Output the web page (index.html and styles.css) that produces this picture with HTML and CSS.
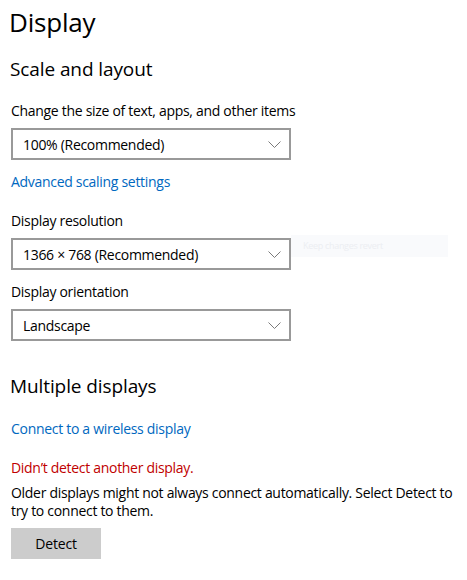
FILE: index.html
```html
<!DOCTYPE html>
<html>
<head>
<meta charset="utf-8">
<link rel="stylesheet" href="styles.css">
</head>
<body>
<main class="page">
  <h1 class="title">Display</h1>
  <h2 class="section">Scale and layout</h2>
  <div class="label label-first">Change the size of text, apps, and other items</div>
  <div class="select"><span>100% (Recommended)</span><svg class="chev" width="13" height="7" viewBox="0 0 13 7"><path d="M0.5 0.5 L6.5 6.5 L12.5 0.5" fill="none" stroke="#7a7a7a" stroke-width="1"/></svg></div>
  <a class="link link-scaling">Advanced scaling settings</a>
  <div class="label label-res">Display resolution</div>
  <div class="row">
    <div class="select"><span>1366 × 768 (Recommended)</span><svg class="chev" width="13" height="7" viewBox="0 0 13 7"><path d="M0.5 0.5 L6.5 6.5 L12.5 0.5" fill="none" stroke="#7a7a7a" stroke-width="1"/></svg></div>
    <div class="ghost"><span>Keep changes revert</span></div>
  </div>
  <div class="label label-orient">Display orientation</div>
  <div class="select"><span>Landscape</span><svg class="chev" width="13" height="7" viewBox="0 0 13 7"><path d="M0.5 0.5 L6.5 6.5 L12.5 0.5" fill="none" stroke="#7a7a7a" stroke-width="1"/></svg></div>
  <h2 class="section second">Multiple displays</h2>
  <a class="link link-wireless">Connect to a wireless display</a>
  <div class="error">Didn’t detect another display.</div>
  <p class="desc">Older displays might not always connect automatically. Select Detect to try to connect to them.</p>
  <button class="btn">Detect</button>
</main>
</body>
</html>
```
FILE: styles.css
```css
html, body {
  margin: 0;
  padding: 0;
  background: #ffffff;
}
body {
  font-family: "Open Sans", "Noto Sans", sans-serif;
  color: #000000;
  font-size: 14px;
  letter-spacing: -0.3px;
}
.page {
  padding: 6px 0 0 11px;
  display: flex;
  flex-direction: column;
  align-items: flex-start;
}
.title {
  margin: 0 0 0 -2px;
  font-size: 26px;
  font-weight: 400;
  line-height: 32px;
  letter-spacing: -0.2px;
}
.section {
  margin: 18px 0 0 -1px;
  font-size: 19px;
  font-weight: 400;
  line-height: 26px;
  letter-spacing: -0.1px;
}
.section.second {
  margin-top: 32px;
}
.label {
  line-height: 20px;
}
.label-first { margin-top: 19px; }
.label-res { margin-top: 19px; }
.label-orient { margin-top: 12px; }
.select {
  box-sizing: border-box;
  margin-top: 7px;
  width: 280px;
  height: 32px;
  border: 2px solid #999999;
  display: flex;
  align-items: center;
  justify-content: space-between;
  padding: 0 8px 0 10px;
}
.chev {
  display: block;
}
.row {
  display: flex;
  align-items: flex-start;
}
.ghost {
  margin-top: 4px;
  width: 157px;
  height: 22px;
  background: #f9fafc;
  color: #eceef2;
  font-size: 9px;
  line-height: 22px;
  padding-left: 12px;
  box-sizing: border-box;
}
.link {
  color: #0068c0;
  line-height: 20px;
  cursor: pointer;
}
.link-scaling { margin-top: 12px; }
.link-wireless { margin-top: 20px; }
.error {
  color: #bf0000;
  margin-top: 19px;
  line-height: 20px;
}
.desc {
  margin: 6px 0 0 0;
  line-height: 18px;
  max-width: 450px;
}
.btn {
  margin-top: 8px;
  width: 90px;
  height: 31px;
  border: none;
  background: #cccccc;
  font-family: inherit;
  font-size: 14px;
  letter-spacing: -0.2px;
  color: #000000;
  padding: 0;
}
```
